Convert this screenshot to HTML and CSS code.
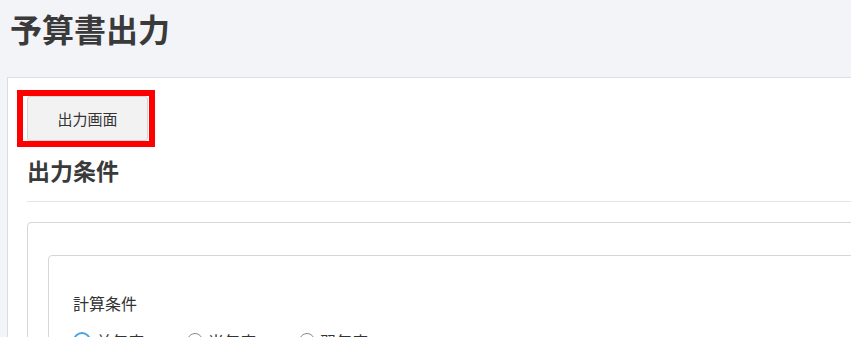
FILE: index.html
```html
<!DOCTYPE html>
<html lang="ja">
<head>
<meta charset="utf-8">
<title>予算書出力</title>
<link rel="stylesheet" href="styles.css">
</head>
<body>
<header class="page-header">
  <h1 class="page-title">予算書出力</h1>
</header>
<main class="panel">
  <div class="highlight">
    <button class="btn" type="button">出力画面</button>
  </div>
  <h2 class="section-title">出力条件</h2>
  <hr class="divider">
  <div class="outer-box">
    <div class="inner-box">
      <div class="field-label">計算条件</div>
      <div class="radio-row">
        <label class="radio"><span class="radio-circle checked"></span><span class="radio-text">前年度</span></label>
        <label class="radio"><span class="radio-circle"></span><span class="radio-text">当年度</span></label>
        <label class="radio"><span class="radio-circle"></span><span class="radio-text">翌年度</span></label>
      </div>
    </div>
  </div>
</main>
</body>
</html>
```
FILE: styles.css
```css
html, body {
  margin: 0;
  padding: 0;
}
body {
  background: #f3f4f8;
  font-family: "Noto Sans CJK JP", "Noto Sans", sans-serif;
  color: #333;
  overflow: hidden;
  height: 337px;
}
.page-header {
  height: 77px;
  padding: 0 10px;
  box-sizing: border-box;
}
.page-title {
  margin: 0;
  padding-top: 8px;
  font-size: 32px;
  line-height: 40px;
  font-weight: bold;
  color: #3a3a3a;
}
.panel {
  display: block;
  margin-left: 7px;
  margin-right: -120px;
  background: #fff;
  border: 1px solid #dcdde2;
  padding: 12px 0 40px 19px;
}
.highlight {
  display: inline-block;
  margin-left: -10px;
  border: 6px solid #ff0000;
  padding: 0 1px 0 4px;
  vertical-align: top;
}
.btn {
  display: block;
  width: 121px;
  height: 45px;
  margin: 0;
  padding: 0;
  background: #f2f2f2;
  border: 1px solid #d6d6d6;
  border-radius: 3px;
  font-family: "Noto Sans CJK JP", sans-serif;
  font-size: 15px;
  color: #333;
}
.section-title {
  margin: 5px 0 0;
  font-size: 23px;
  line-height: 36px;
  font-weight: bold;
  color: #3a3a3a;
}
.divider {
  margin: 13px 0 0;
  border: 0;
  border-top: 1px solid #e5e5e5;
  height: 0;
}
.outer-box {
  margin-top: 20px;
  border: 1px solid #d6d6d6;
  border-radius: 4px;
  padding: 32px 20px 20px 20px;
}
.inner-box {
  border: 1px solid #d6d6d6;
  border-radius: 4px;
  padding: 35px 24px 20px 24px;
}
.field-label {
  font-size: 16px;
  line-height: 24px;
  color: #333;
}
.radio-row {
  display: flex;
  margin-top: 14px;
  line-height: 24px;
  font-size: 16px;
}
.radio {
  display: flex;
  align-items: center;
  gap: 5px;
  margin-right: 43px;
}
.radio-circle {
  width: 14px;
  height: 14px;
  border: 1px solid #8a8a8a;
  border-radius: 50%;
  box-sizing: content-box;
}
.radio-circle.checked {
  border: 2px solid #4aa3df;
  width: 14px;
  height: 14px;
}
.radio-text {
  color: #333;
}
```
